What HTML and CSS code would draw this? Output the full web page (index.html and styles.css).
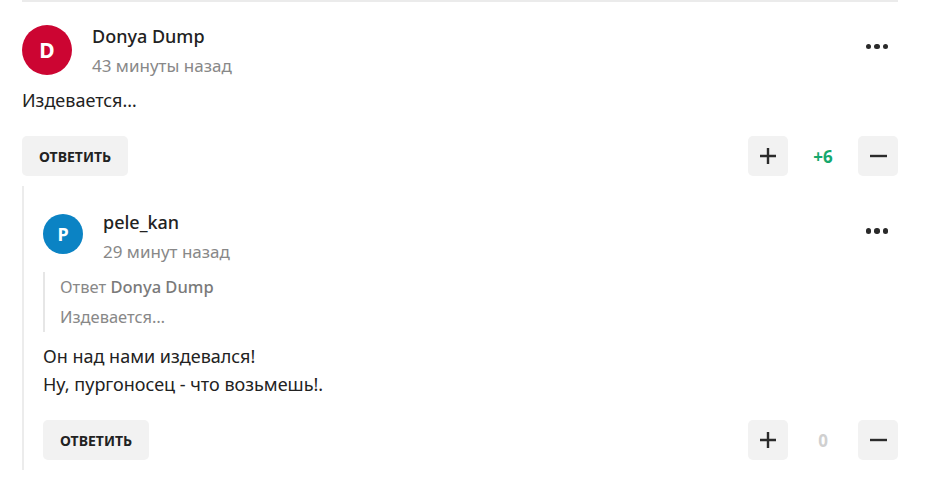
FILE: index.html
```html
<!DOCTYPE html>
<html lang="ru">
<head>
<meta charset="UTF-8" />
<meta name="viewport" content="width=device-width, initial-scale=1" />
<title>Комментарии</title>
<link rel="stylesheet" href="styles.css">
</head>
<body>

<div class="comments">
  <div class="comment">
    <div class="head">
      <div class="avatar red">D</div>
      <div class="meta">
        <div class="name">Donya Dump</div>
        <div class="time">43 минуты назад</div>
      </div>
      <button class="more"><span></span><span></span><span></span></button>
    </div>
    <div class="text">Издевается…</div>
    <div class="actions">
      <button class="reply">Ответить</button>
      <div class="votes">
        <button class="vote"><svg width="18" height="18" viewBox="0 0 18 18"><path d="M9 1v16M1 9h16" stroke="#2b2b2b" stroke-width="2.4"/></svg></button>
        <span class="score plus">+6</span>
        <button class="vote"><svg width="18" height="18" viewBox="0 0 18 18"><path d="M1 9h17" stroke="#2b2b2b" stroke-width="2.4"/></svg></button>
      </div>
    </div>

    <div class="comment child">
      <div class="head">
        <div class="avatar small blue">P</div>
        <div class="meta">
          <div class="name">pele_kan</div>
          <div class="time">29 минут назад</div>
        </div>
        <button class="more"><span></span><span></span><span></span></button>
      </div>
      <div class="quote">
        <div>Ответ <b>Donya Dump</b></div>
        <div>Издевается…</div>
      </div>
      <div class="text">Он над нами издевался!<br>Ну, пургоносец - что возьмешь!.</div>
      <div class="actions">
        <button class="reply">Ответить</button>
        <div class="votes">
          <button class="vote"><svg width="18" height="18" viewBox="0 0 18 18"><path d="M9 1v16M1 9h16" stroke="#2b2b2b" stroke-width="2.4"/></svg></button>
          <span class="score zero">0</span>
          <button class="vote"><svg width="18" height="18" viewBox="0 0 18 18"><path d="M1 9h17" stroke="#2b2b2b" stroke-width="2.4"/></svg></button>
        </div>
      </div>
    </div>
  </div>
</div>

</body>
</html>
```

FILE: styles.css
```css
body { margin: 0; background: #fff; font-family: "Noto Sans", Roboto, sans-serif; color: #222; }
button { font-family: inherit; border: none; cursor: pointer; }

.comments { width: 876px; margin-left: 22px; }
.comment { border-top: 2px solid #ebebeb; padding-top: 22px; }
.comment.child {
  border-top: none; border-left: 2px solid #ececec;
  margin-top: 10px; padding: 21px 0 10px 19px;
}

.head { display: flex; align-items: center; gap: 20px; }
.avatar {
  width: 50px; height: 50px; border-radius: 50%; flex-shrink: 0;
  display: flex; align-items: center; justify-content: center;
  color: #fff; font-weight: 700; font-size: 21px;
}
.avatar.small { width: 40px; height: 40px; font-size: 18px; }
.avatar.red { background: #cc0532; }
.avatar.blue { background: #0b83c4; }
.meta { flex: 1; margin-bottom: -3px; }
.child .meta { margin-top: 3px; }
.name { font-size: 18px; font-weight: 500; line-height: 24px; color: #222; }
.time { font-size: 17px; line-height: 24px; color: #888; margin-top: 6px; }

.more {
  background: none; display: flex; gap: 3px; padding: 0 10px 6px 0;
}
.more span { width: 5.5px; height: 5.5px; border-radius: 50%; background: #2a2a2a; }

.text { font-size: 18px; line-height: 28px; margin-top: 11px; }

.quote {
  border-left: 2px solid #e6e6e6; padding-left: 15px; margin-top: 11px;
  font-size: 16.5px; line-height: 30px; color: #888;
}
.quote b { font-weight: 500; color: #7a7a7a; }
.quote + .text { margin-top: 10px; }

.actions { display: flex; justify-content: space-between; align-items: center; margin-top: 22px; }
.reply {
  height: 40px; padding: 0 17px; background: #f2f2f2; border-radius: 5px;
  font-size: 14px; font-weight: 700; text-transform: uppercase; color: #222;
}
.votes { display: flex; align-items: center; }
.vote {
  width: 40px; height: 40px; background: #f2f2f2; border-radius: 5px;
  display: flex; align-items: center; justify-content: center; padding: 0;
}
.score { width: 70px; text-align: center; font-size: 17px; font-weight: 700; }
.score.plus { color: #16a86d; }
.score.zero { color: #d0d0d0; }
```
